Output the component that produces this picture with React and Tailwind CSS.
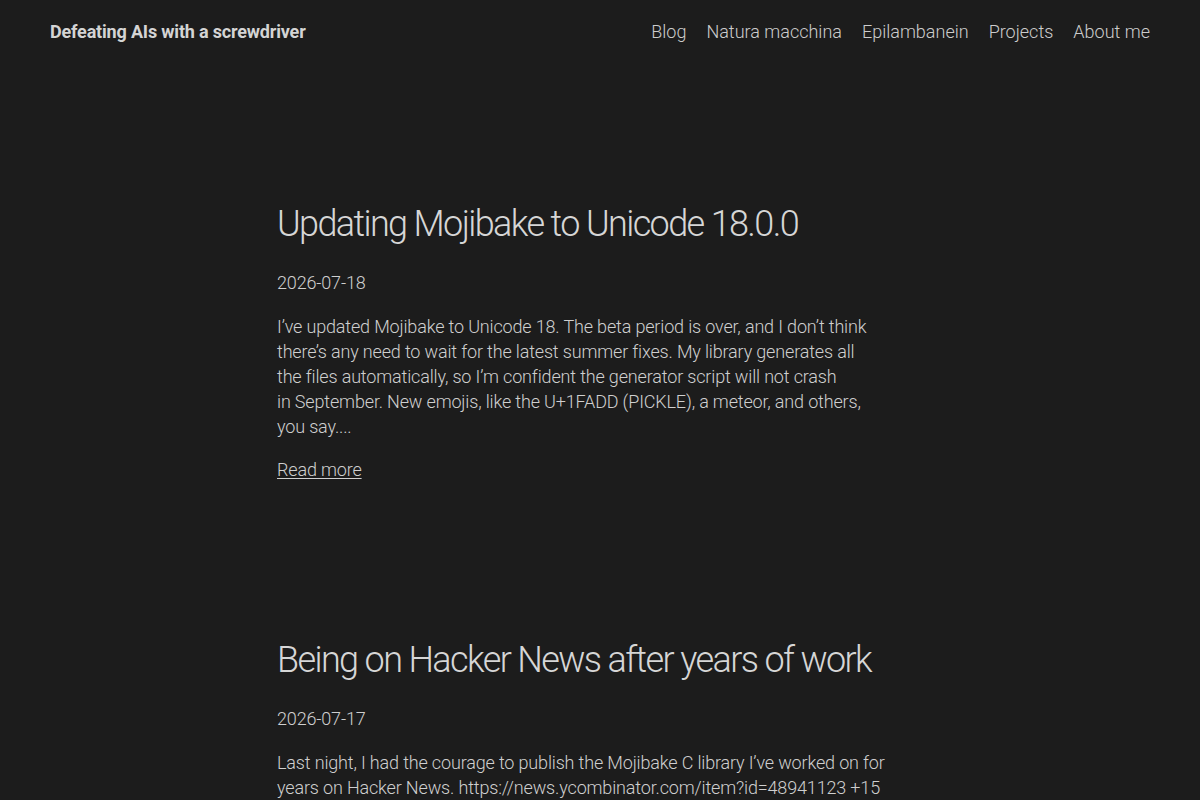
const posts = [
  {
    title: 'Updating Mojibake to Unicode 18.0.0',
    date: '2026-07-18',
    excerpt:
      'I’ve updated Mojibake to Unicode 18. The beta period is over, and I don’t think there’s any need to wait for the latest summer fixes. My library generates all the\u00a0files automatically, so I’m confident the generator script will not crash in\u00a0September. New emojis, like the U+1FADD (PICKLE), a meteor, and others, you\u00a0say....',
  },
  {
    title: 'Being on Hacker News after years of work',
    date: '2026-07-17',
    excerpt:
      'Last night, I had the courage to publish the Mojibake C library I’ve worked on for years on Hacker News. https://news.ycombinator.com/item?id=48941123 +15 points and a handful of comments later, I can say it was worth it....',
  },
];

const links = ['Blog', 'Natura macchina', 'Epilambanein', 'Projects', 'About me'];

export default function App() {
  return (
    <div className="min-h-screen bg-[#1c1c1c] text-[#cfcfcf] font-['Roboto','Noto_Sans',sans-serif]">
      <header className="h-16 px-[50px] flex items-center justify-between">
        <a href="#" className="text-lg font-bold tracking-[-0.01em] text-[#d4d4d4]">
          Defeating AIs with a screwdriver
        </a>
        <nav className="flex items-center gap-5 text-lg font-light text-[#cccccc]">
          {links.map((l) => (
            <a key={l} href="#">{l}</a>
          ))}
        </nav>
      </header>

      <main className="ml-[277px] w-[620px] pt-[139px] tracking-[-0.01em]">
        {posts.map((p) => (
          <article key={p.date} className="mb-[156px]">
            <h2 className="text-4xl leading-[43px] font-light tracking-[-0.045em] text-[#d6d6d6]">{p.title}</h2>
            <p className="mt-[24px] text-lg leading-[25px] font-light">{p.date}</p>
            <p className="mt-[19px] text-lg leading-[25px] font-light">{p.excerpt}</p>
            <a href="#" className="inline-block mt-[18px] text-lg leading-[25px] font-light underline underline-offset-2">
              Read more
            </a>
          </article>
        ))}
      </main>
    </div>
  );
}
